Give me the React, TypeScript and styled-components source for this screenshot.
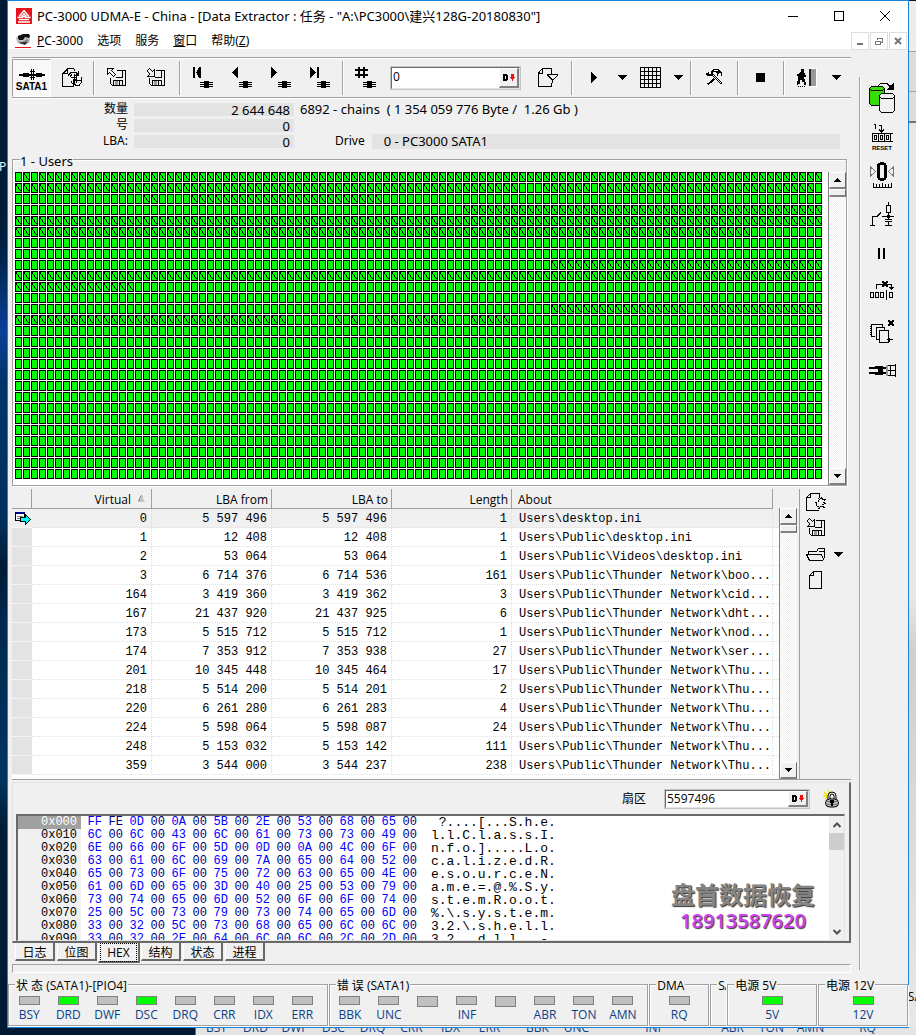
import React from 'react';
import styled, { createGlobalStyle, css } from 'styled-components';

const SANS = '"Open Sans", "Noto Sans CJK SC", sans-serif';
const WIDE = '"Noto Sans", "Noto Sans CJK SC", sans-serif';
const MONO = '"Liberation Mono", "Noto Sans CJK SC", monospace';

const Global = createGlobalStyle`
  *, *::before, *::after { box-sizing: border-box; }
  html, body { margin: 0; background: #001a35; }
  body { font: 12px/16px ${SANS}; color: #000; }
  button, input { font: inherit; color: inherit; margin: 0; border-radius: 0; }
  button { padding: 0; border: 0; background: none; }
  svg { display: block; flex: none; }
`;

/* ---------- desktop and window frame ---------- */

const Desktop = styled.div`
  position: relative;
  overflow: hidden;
  min-height: 100vh;
  padding: 0 7px 7px;
  background: linear-gradient(#001a36 0, #001d3a 22%, #00264d 25%, #0a3f98 32%, #003468 37%, #00305f 50%, #001b36 55%, #00284f 60%, #003561 75%, #001d36 80%, #001a33 100%);
`;

const DesktopLabel = styled.span`
  position: absolute;
  left: -1px;
  top: 159px;
  color: #fff;
`;

const BackWindow = styled.div`
  position: absolute;
  left: 195px;
  right: 0;
  top: 1px;
  bottom: 0;
  display: flex;
  flex-direction: column;
  justify-content: flex-end;
  overflow: hidden;
  border-left: 1px solid #1883d7;
  background: linear-gradient(#ececec 0 50px, #a0a0a0 50px 51px, #dcdcdc 51px 90px, #a0a0a0 90px 91px, #dcdcdc 91px 120px, #777 120px 122px, #e6e6e6 122px 600px, #cfcfcf 650px, #e8e8e8);
`;

const BackTitle = styled.span`
  position: absolute;
  right: -6px;
  bottom: 30px;
`;

const BackRow = styled.div`
  display: flex;
  height: 8px;
  padding-left: 1px;
  background: #e4e4e4;
  color: #0d3f86;
  line-height: 8px;
  align-items: center;
`;

const BackCell = styled.span<{ $wide?: number }>`
  flex: none;
  width: ${p => p.$wide ?? 39}px;
  height: 8px;
  text-align: center;
  line-height: 2px;
`;

const Window = styled.main`
  position: relative;
  border: 1px solid #1883d7;
  background: #f0f0f0;
`;

const TitleBar = styled.header`
  display: flex;
  align-items: center;
  height: 30px;
  padding-left: 8px;
  background: #fff;
`;

const Title = styled.h1`
  flex: 1;
  margin: 0 0 0 5px;
  font-family: ${WIDE};
  font-size: 13px;
  font-weight: 400;
  white-space: nowrap;
`;

const CaptionButton = styled.button`
  display: grid;
  place-items: center;
  width: 46px;
  height: 28px;
`;

const MenuBar = styled.nav`
  display: flex;
  align-items: center;
  height: 18px;
  padding: 1px 0 0 7px;
  background: #fff;
  font-family: ${WIDE};
`;

const MenuItem = styled.button`
  margin-left: 6px;
  margin-right: 8px;
  white-space: nowrap;
`;

const MdiButtons = styled.div`
  display: flex;
  gap: 1px;
  margin-left: auto;
  padding-right: 1px;
`;

const MdiButton = styled.button`
  display: grid;
  place-items: center;
  width: 18px;
  height: 18px;
  border: 1px solid #dedede;
`;

/* ---------- work area ---------- */

const Workspace = styled.div`
  display: flex;
  padding-left: 4px;
`;

const Main = styled.div`
  flex: 1;
  min-width: 0;
  padding-top: 8px;
`;

const SideBar = styled.aside`
  flex: none;
  width: 49px;
  margin: 28px 0 7px 8px;
  border-left: 1px solid #a0a0a0;
  box-shadow: inset 1px 0 #fff;
`;

const SideButton = styled.button`
  display: grid;
  place-items: center;
  width: 44px;
  height: 39px;
`;

const ToolBar = styled.div`
  display: flex;
  align-items: center;
  height: 41px;
  border-top: 1px solid #a0a0a0;
  border-bottom: 1px solid #a0a0a0;
  box-shadow: inset 0 1px #fff, 0 1px #fff;
`;

const ToolGroup = styled.div<{ $pad?: number }>`
  display: flex;
  align-items: center;
  height: 34px;
  padding: 0 ${p => p.$pad ?? 3}px;
  border-left: 1px solid #a0a0a0;
  box-shadow: inset 1px 0 #fff;
  &:first-child { padding: 0; border-left: 0; box-shadow: none; }
`;

const ToolButton = styled.button<{ $w?: number }>`
  display: grid;
  place-items: center;
  width: ${p => p.$w ?? 39}px;
  height: 34px;
`;

const PortButton = styled.button`
  display: flex;
  flex-direction: column;
  align-items: center;
  gap: 0;
  width: 39px;
  height: 38px;
  padding-top: 8px;
  border: 1px solid #fff;
  border-top-color: #a0a0a0;
  border-left-color: #a0a0a0;
  background: #f8f8f8;
  font: bold 10px/12px "Liberation Sans", sans-serif;
`;

const Field = styled.div<{ $w: number }>`
  display: flex;
  width: ${p => p.$w}px;
  height: ${p => (p.$w < 140 ? 24 : 20)}px;
  margin: 0 ${p => (p.$w < 140 ? 7 : 4)}px 0 5px;
  border: 2px solid #e3e3e3;
  border-top-color: #696969;
  border-left-color: #696969;
  outline: 1px solid #c4c4c4;
  outline-offset: -1px;
  background: #fff;
`;

const FieldInput = styled.input`
  flex: 1;
  width: 20px;
  padding: 0 0 1px 1px;
  border: 0;
  outline: 0;
  background: transparent;
`;

const FieldButton = styled.button`
  display: grid;
  place-items: center;
  width: 20px;
  border: 1px solid #fff;
  border-right: 2px solid #808080;
  border-bottom: 2px solid #808080;
  background: #f0f0f0;
`;

/* ---------- chain info ---------- */

const Info = styled.dl`
  display: grid;
  grid-template-columns: 116px 160px auto 1fr;
  column-gap: 6px;
  row-gap: 0;
  align-items: center;
  height: 53px;
  margin: 0;
  padding: 3px 11px 2px 0;
  grid-auto-rows: 16px;
  font-family: ${WIDE};
`;

const InfoLabel = styled.dt`
  text-align: right;
  white-space: nowrap;
`;

const InfoValue = styled.dd`
  height: 13px;
  margin: 0;
  padding-right: 4px;
  background: #e3e3e3;
  font-size: 13px;
  line-height: 14px;
  text-align: right;
`;

const InfoNote = styled.dd`
  grid-column: 3 / 5;
  margin: 0;
  font-size: 13px;
  white-space: pre;
`;

const DriveRow = styled.dd`
  grid-column: 3 / 5;
  display: flex;
  align-items: center;
  margin: 0;
  padding-left: 35px;
`;

const DriveValue = styled.span`
  flex: 1;
  height: 15px;
  margin-left: 7px;
  padding-left: 12px;
  background: #e3e3e3;
  font-size: 13px;
  line-height: 15px;
`;

/* ---------- sector map ---------- */

const MapFrame = styled.section`
  position: relative;
  display: flex;
  height: 327px;
  margin: 8px 4px 0 0;
  padding-top: 12px;
  border: 1px solid #a0a0a0;
  box-shadow: 1px 1px #fff, inset 1px 1px #fff;
`;

const MapTitle = styled.h2`
  position: absolute;
  left: 7px;
  top: -6px;
  margin: 0;
  background: #f0f0f0;
  font-family: ${WIDE};
  font-size: 13px;
  font-weight: 400;
  line-height: 14px;
`;

const MapArea = styled.div`
  flex: 1;
  min-width: 0;
  overflow: hidden;
  padding: 0 0 0 2px;
  background: #fff;
`;

const track = css`
  background: repeating-conic-gradient(#fff 0 25%, #f0f0f0 0 50%) 0 0 / 2px 2px;
`;

const ScrollTrack = styled.div`
  display: flex;
  flex-direction: column;
  flex: none;
  width: 18px;
  border-left: 1px solid #808080;
  ${track}
`;

const ScrollButton = styled.button<{ $end?: boolean }>`
  display: grid;
  place-items: center;
  height: 17px;
  margin-top: ${p => (p.$end ? 'auto' : '0')};
  border: 1px solid #fff;
  border-right: 1px solid #696969;
  border-bottom: 2px solid #808080;
  background: #f0f0f0;
`;

const ScrollThumb = styled.div`
  height: 8px;
  border: 1px solid #fff;
  border-right-color: #696969;
  border-bottom: 2px solid #808080;
  background: #f0f0f0;
`;

/* ---------- chain list ---------- */

const ListPane = styled.section`
  display: flex;
  height: 291px;
  margin-top: 3px;
  border-bottom: 1px solid #a0a0a0;
`;

const ListBody = styled.div`
  flex: 1;
  min-width: 0;
  overflow: hidden;
  background: #fff;
`;

const Table = styled.table`
  width: 100%;
  table-layout: fixed;
  border-collapse: separate;
  border-spacing: 0;
`;

const HeadCell = styled.th<{ $left?: boolean }>`
  height: 20px;
  padding: 2px 3px 0 6px;
  border-right: 1px solid #a0a0a0;
  border-bottom: 1px solid #a0a0a0;
  background: #f0f0f0;
  font-weight: 400;
  line-height: 16px;
  text-align: ${p => (p.$left ? 'left' : 'right')};
  white-space: nowrap;
  &:last-child { border: 0; }
  svg { display: inline-block; margin: 0 2px 2px 7px; }
`;

const Row = styled.tr<{ $active?: boolean }>`
  background: ${p => (p.$active ? '#f0f0f0' : '#fff')};
`;

const Cell = styled.td<{ $left?: boolean }>`
  height: 19px;
  padding: 2px 4px 0 ${p => (p.$left ? 7 : 2)}px;
  border-right: 1px dotted #dcdcdc;
  border-bottom: 1px dotted #e2e2e2;
  font-family: ${MONO};
  line-height: 16px;
  text-align: ${p => (p.$left ? 'left' : 'right')};
  white-space: pre;
  &:last-child { padding: 0; border-right: 0; }
`;

const MarkCell = styled.td<{ $active?: boolean }>`
  padding: 1px 0 0 3px;
  border-bottom: 1px dotted #fff;
  background: ${p => (p.$active ? '#f0f0f0' : '#e3e3e3')};
`;

const ListScroll = styled.div`
  display: flex;
  padding-top: 19px;
`;

const ListTools = styled.div`
  display: grid;
  grid-template-columns: 24px 22px;
  grid-auto-rows: 26px;
  align-content: start;
  flex: none;
  width: 52px;
  margin-left: 2px;
  padding-left: 4px;
  border-left: 1px solid #a0a0a0;
`;

const ListTool = styled.button<{ $drop?: boolean }>`
  display: grid;
  place-items: center;
  grid-column: ${p => (p.$drop ? 2 : 1)};
`;

/* ---------- sector viewer ---------- */

const Viewer = styled.section`
  height: 161px;
  margin-top: 2px;
  padding: 6px 4px 0 3px;
  border: 1px solid #e3e3e3;
  border-right: 2px solid #696969;
  border-bottom: 2px solid #696969;
`;

const ViewerBar = styled.div`
  display: flex;
  align-items: center;
  justify-content: flex-end;
  height: 20px;
  padding-right: 5px;
`;

const ViewerLabel = styled.label`
  margin-right: 13px;
`;

const LockButton = styled.button`
  margin-left: 9px;
`;

const HexPane = styled.div`
  position: relative;
  display: flex;
  height: 127px;
  margin-top: 5px;
  border: 1px solid #e3e3e3;
  border-top: 2px solid #696969;
  border-left: 2px solid #696969;
  background: #fff;
`;

const HexScroll = styled.div`
  flex: 1;
  overflow: hidden;
`;

const HexTable = styled.table`
  border-collapse: collapse;
  font-family: ${MONO};
  font-size: 12px;
  line-height: 13px;
  td, th { height: 13px; padding: 0; font-weight: 400; }
`;

const Offset = styled.th<{ $active?: boolean }>`
  width: 63px;
  background: ${p => (p.$active ? '#a0a0a0' : '#f0f0f0')};
  color: ${p => (p.$active ? '#fff' : '#000')};
  text-align: right;
  && { padding-right: 4px; }
`;

const Byte = styled.td<{ $odd: boolean }>`
  width: 21px;
  color: ${p => (p.$odd ? '#000080' : '#0000ff')};
  text-align: right;
`;

const Ascii = styled.td`
  font-size: 13px;
  white-space: pre;
  && { padding-left: 14px; }
`;

const FlatScroll = styled.div`
  display: flex;
  flex-direction: column;
  align-items: stretch;
  width: 15px;
  background: #f0f0f0;
`;

const FlatArrow = styled.button<{ $end?: boolean }>`
  display: grid;
  place-items: center;
  height: 17px;
  margin-top: ${p => (p.$end ? 'auto' : '0')};
`;

const FlatThumb = styled.div`
  height: 17px;
  background: #cdcdcd;
`;

const Watermark = styled.div`
  position: absolute;
  right: 29px;
  bottom: 7px;
  text-align: center;
  text-shadow: 1px 1px 1px #333;
`;

const WatermarkName = styled.div`
  color: #858585;
  font-size: 24px;
  font-weight: 600;
  line-height: 28px;
`;

const WatermarkPhone = styled.div`
  color: #cc44f2;
  font: 600 20px/24px ${SANS};
`;

const Tabs = styled.div`
  display: flex;
  gap: 2px;
  height: 21px;
  padding-left: 3px;
`;

const Tab = styled.button<{ $active?: boolean }>`
  width: ${p => (p.$active ? 42 : 40)}px;
  height: ${p => (p.$active ? 20 : 18)}px;
  margin: ${p => (p.$active ? '0 -1px' : '0')};
  border: 1px solid #fff;
  border-top: 0;
  border-right: 2px solid #696969;
  border-bottom: 2px solid #696969;
  line-height: 17px;
  span {
    display: block;
    margin: 0 1px;
    border: 1px dotted ${p => (p.$active ? '#000' : 'transparent')};
  }
`;

const MessageBar = styled.div`
  height: 9px;
  margin-bottom: 4px;
  border: 1px solid #fff;
  border-top-color: #a0a0a0;
  border-left-color: #a0a0a0;
`;

/* ---------- status lamps ---------- */

const StatusBar = styled.footer`
  display: grid;
  grid-template-columns: 320fr 320fr 60fr 16fr 90fr 90fr;
  gap: 1px;
  height: 50px;
  padding-top: 7px;
`;

const LampGroup = styled.fieldset<{ $count: number }>`
  position: relative;
  display: flex;
  justify-content: center;
  min-width: 0;
  height: 42px;
  margin: 0;
  padding: 11px ${p => (p.$count > 1 ? 4 : 0)}px 0 0;
  border: 1px solid #a0a0a0;
  border-right-width: ${p => (p.$count ? 1 : 0)}px;
  box-shadow: 1px 1px #fff, inset 1px 1px #fff;
`;

const LampTitle = styled.span`
  position: absolute;
  left: 6px;
  top: -7px;
  max-width: calc(100% - 6px);
  overflow: hidden;
  padding: 0 1px;
  background: #f0f0f0;
  line-height: 16px;
  white-space: nowrap;
`;

const Lamp = styled.div`
  display: flex;
  flex-direction: column;
  align-items: center;
  width: 39px;
  color: #0d3f86;
  line-height: 20px;
`;

const LampLight = styled.span<{ $on?: boolean }>`
  width: 21px;
  height: 11px;
  border: 1px solid #808080;
  background: ${p => (p.$on ? '#00ff00' : '#c0c0c0')};
`;

/* ---------- drawings ---------- */

type PicProps = { w: number; h: number; children: React.ReactNode };
const Pic = ({ w, h, children }: PicProps) => (
  <svg width={w} height={h} viewBox={`0 0 ${w} ${h}`} shapeRendering="crispEdges" fill="none" stroke="#000" aria-hidden="true">
    {children}
  </svg>
);

const Down = () => (
  <Pic w={10} h={5}><path d="M0 0h9v1h-1v1h-1v1h-1v1h-1v1h-1v-1h-1v-1h-1v-1h-1v-1h-1z" fill="#000" stroke="none" /></Pic>
);
const SmallArrow = ({ up }: { up?: boolean }) => (
  <Pic w={7} h={4}>
    <path d={up ? 'M3 0h1v1h1v1h1v1h1v1h-7v-1h1v-1h1v-1h1z' : 'M0 0h7v1h-1v1h-1v1h-1v1h-1v-1h-1v-1h-1v-1h-1z'} fill="#000" stroke="none" />
  </Pic>
);
const Chevron = ({ up }: { up?: boolean }) => (
  <svg width="8" height="6" viewBox="0 0 8 6" fill="none" stroke="#505050" strokeWidth="2"><path d={up ? 'M0.5 5L4 1.5 7.5 5' : 'M0.5 1L4 4.5 7.5 1'} /></svg>
);
const DIcon = () => (
  <Pic w={12} h={9}>
    <path d="M0 1h4v1h1v5h-1v1h-4zM2 3v3h1v-3z" fill="#000" fillRule="evenodd" stroke="none" />
    <path d="M8 1h3v3h1v1h-1v1h-1v1h-1v-1h-1v-1h-1v-1h1zM7 4h5v1h-5zM8 5h3v1h-3zM9 6h1v2h-1z" fill="#e81010" stroke="none" />
  </Pic>
);
const Logo = () => (
  <svg width="16" height="16" viewBox="0 0 16 16" fill="none" stroke="#fff" strokeWidth="1.3">
    <rect width="16" height="16" fill="#e8141c" stroke="none" />
    <path d="M3 8.500L8 2.500l5 6M5.500 8.500L8 5.500l2.500 3M1.500 9.500h5l1.500-1.500 1.500 1.500h5M3 11.700h10M2 14h12" />
  </svg>
);
const MenuLogo = () => (
  <svg width="16" height="16" viewBox="0 0 16 16">
    <path d="M1 5q1-3 7-3t7 1v5q-1 3-7 3t-6-2z" fill="#c0c0c0" />
    <path d="M3 3l5-2h6l1 2-1 2-4-1-2 3-4 0-1-2z" fill="#111" />
    <path d="M3 8l4 1 5-3 2 2-4 3-5-1z" fill="#888" />
    <path d="M4 10l4-1 5 0-3 3z" fill="#333" />
    <path d="M0 14h16v1H0z" fill="#e81010" />
  </svg>
);
const PortIcon = () => (
  <Pic w={26} h={13}>
    <path d="M0 6h26v2h-26zM4 5h6v4h-6zM17 5h6v4h-6z" fill="#000" stroke="none" />
    <path d="M11 3.500h5M11 9.500h5M12.500 1v11M14.500 1v11" />
  </Pic>
);
const NavIcon = ({ kind }: { kind: 'first' | 'prev' | 'next' | 'last' | 'hash' }) => (
  <Pic w={22} h={22}>
    <g fill="#000" stroke="none">
      {kind === 'first' && <path d="M1 0h2v11h-2zM4 5l1-1v-1l1-1v-1h1v-1h2v11h-2v-1h-1v-1l-1-1v-1l-1-1z" />}
      {kind === 'prev' && <path d="M1 5h1v-1h1v-1h1v-1h1v-1h1v-1h1v11h-1v-1h-1v-1h-1v-1h-1v-1h-1v-1h-1z" />}
      {kind === 'next' && <path d="M1 0h1v1h1v1h1v1h1v1h1v1h1v1h-1v1h-1v1h-1v1h-1v1h-1v1h-1z" />}
      {kind === 'last' && <path d="M1 0h1v1h1v1h1v1h1v1h1v1h1v1h-1v1h-1v1h-1v1h-1v1h-1v1h-1zM8 0h2v11h-2z" />}
      {kind === 'hash' && <path d="M3 0h2v11h-2zM8 0h2v11h-2zM0 2h13v2h-13zM0 7h13v2h-13z" />}
      <path d="M8 15h13v1h-13zM8 17h13v1h-13zM8 19h13v1h-13zM12 14h5v7h-5z" />
    </g>
  </Pic>
);
const PageRefresh = () => (
  <Pic w={21} h={20}>
    <path d="M5 .5h7M5.500 1l-5 5v12.500h11M1 5.500h4v-5M12.500 1v2" />
    <path d="M6 7.500l3-3h5l2 2M16.500 3v4h-4M8 8.500l2-2M15 11.500h-4v4M11.500 15l2 2h4l2-3M9 13l3 5M12.500 6v9M14.500 6v9M9 9.500h5M13 12.500h6M19.500 9v5" />
  </Pic>
);
const Disk = ({ out }: { out?: boolean }) => (
  <Pic w={20} h={20}>
    <path d={out ? 'M.5 .5h6l-2 2 4 4-2 2-4-4-2 2z' : 'M3.500 .5l3 3 2-2v6.500h-6.500l2-2-3-3z'} />
    <path d="M10 2.500h8.500v15h-13l-2-2v-6M9 9.500h6.500v-7M6.500 17v-5h9v5M12.500 13v4" />
    <path d="M8 13h3v4h-3z" fill="#999" stroke="none" />
  </Pic>
);
const PageFilter = () => (
  <Pic w={21} h={20}>
    <path d="M4 .5h9.500v5M4.500 1v4h-4M4 1l-3.500 4v13.500h13v-4M9 6.500h11M9.500 7l5 5v3M20 7l-5 5" />
  </Pic>
);
const GridIcon = () => (
  <Pic w={22} h={22}>
    <path d="M0 .5h21M0 4.500h21M0 8.500h21M0 12.500h21M0 16.500h21M0 20.500h21M.5 0v21M4.500 0v21M8.500 0v21M12.500 0v21M16.500 0v21M20.500 0v21" />
  </Pic>
);
const ToolsIcon = () => (
  <Pic w={17} h={17}>
    <path d="M5 5l10 10M6 4l10 10M14.500 15.500l1.500-1.500M10 7l-8 8M11 8l-9 8M1 14l2 2" />
    <path d="M0 4h2v-1h1v2h2v-3h1v1h1v3h-1v1h-5v-1h-1zM6 1h1v-1h6v1h1v1h1v1h1v4h-1v-3h-2v1h-1v2h-1v-3h-1v-1h-4z" fill="#000" stroke="none" />
    <path d="M8 1h4v1h-4z" fill="#f0f0f0" stroke="none" />
  </Pic>
);
const ExitIcon = () => (
  <Pic w={20} h={19}>
    <path d="M12 0h8v19h-8z" fill="#fff" stroke="none" />
    <path d="M12 1h2v17h-2z" fill="#222" stroke="none" />
    <path d="M14 1h5v17h-5z" fill="#999" stroke="none" />
    <path d="M4 1h3v3h-3zM3 4h4v1h1v2h1v2h-2v2h1v3h1v3h-2v-3h-2v-2h-2v4h-2v1h-2v-1h1v-3h1v-5h-1v2h-1v-4h2z" fill="#000" stroke="none" />
    <path d="M1 18.500h8" strokeDasharray="1 1" />
  </Pic>
);

const CopyIcon = () => (
  <Pic w={32} h={32}>
    <path d="M3.500 7.500l2-2h11l2 2v15l-2 2h-11l-2-2z" fill="#37dc06" />
    <path d="M3.500 7.500l2 2h11l2-2" />
    <path d="M13.500 14.500l2-2h11l2 2v15l-2 2h-11l-2-2z" fill="#f0f0f0" />
    <path d="M13.500 15.500l2 2h11l2-2M12 4.500l3-2h6l3 3" />
    <path d="M28 1v8h-8l4-3-1-2h3z" fill="#000" stroke="none" />
  </Pic>
);
const ResetIcon = () => (
  <Pic w={32} h={32}>
    <path d="M8 4.500h2M9.500 4v5M13 5.500h2.500v6M13 9.500l2.500 2.500 2.500-2.500" />
    <path d="M27 13.500h-20.500v8h20.500M12.500 13v9M18.500 13v9M24.500 13v9" />
    <rect x="8.500" y="15.500" width="2" height="4" /><rect x="14.500" y="15.500" width="2" height="4" /><rect x="20.500" y="15.500" width="2" height="4" />
    <text x="6" y="30" fill="#000" stroke="none" fontFamily="Liberation Sans" fontWeight="700" fontSize="6">RESET</text>
  </Pic>
);
const ZeroIcon = () => (
  <Pic w={32} h={32}>
    <rect x="12.500" y="4.500" width="7" height="16" rx="3" strokeWidth="3" />
    <path d="M4.500 8v9l5-4.500zM27.500 8v9l-5-4.500z" stroke="#777" />
    <path d="M7 28.500h19M7.500 24v5M10.500 25v3M13.500 25v3M16.500 24v5M19.500 25v3M22.500 25v3M25.500 24v5" />
  </Pic>
);
const SwitchIcon = () => (
  <Pic w={32} h={32}>
    <path d="M4 27.500h5M6.500 27v-8.500h4.500l4-4M16 18.500h12M22.500 4v3M20.500 7.500h4v7h-4zM22.500 14v7M19 21.500h7M19 23.500h7M22.500 24v3M19 27.500h7" />
    <path d="M21 17h3v3h-3z" fill="#000" stroke="none" />
  </Pic>
);
const PauseIcon = () => (
  <Pic w={32} h={32}><path d="M12 11h2v11h-2zM17 11h2v11h-2z" fill="#000" stroke="none" /></Pic>
);
const SkipIcon = () => (
  <Pic w={32} h={32}>
    <path d="M4.500 16.500h3v5h-3zM9.500 16.500h3v5h-3zM14.500 16.500h3v5h-3zM23.500 16.500h3v5h-3zM20.500 14v10M10.500 13v-4.500h15v5M23 11.500h5M24 12.500h3" />
    <path d="M16 5h2v1h2v-1h2v2h-1v2h1v2h-2v-1h-2v1h-2v-2h1v-2h-1z" fill="#000" stroke="none" />
  </Pic>
);
const StackIcon = () => (
  <Pic w={32} h={32}>
    <path d="M12 9.500h-6.500v12h3M4 11.500h2M4 13.500h2M4 15.500h2M4 17.500h2M4 19.500h2M10 12.500h6v-3h-5M10.500 12v12h3M10 12.500h8.500v3M13.500 15.500h9v12h-9zM21 24.500h6M23.500 23v4" />
    <path d="M22 5h2v1h2v-1h2v2h-1v2h1v2h-2v-1h-2v1h-2v-2h1v-2h-1z" fill="#000" stroke="none" />
  </Pic>
);
const PlugIcon = () => (
  <Pic w={32} h={32}>
    <path d="M3 13h19v2h-19zM3 18h19v2h-19zM12 15h5v3h-5zM9 12h8v1h-8zM9 20h8v1h-8z" fill="#000" stroke="none" />
    <path d="M20 11h2v11h-2z" fill="#999" stroke="none" />
    <path d="M22 11.500h7M22 21.500h7M22 16.500h7M24.500 11v11M29.500 10v13" />
  </Pic>
);
const PageGear = () => (
  <Pic w={20} h={19}>
    <path d="M13 17.500h-12.500v-13l4-4h9v4M4.500 0v4.500h-4" />
    <path d="M12 5.500l2 1 2-2 1 2 2 0-1 3 1 1-2 1 1 3-3-1-2 2-1-2-2 0 1-3-1-1 2-1z" strokeDasharray="2 1" />
  </Pic>
);
const FolderIcon = () => (
  <Pic w={20} h={13}>
    <path d="M2.500 5.500v-2h8l2-3h6v9l-2 3h-13l-3-6h15l2 5M13 3.500h5" />
  </Pic>
);
const PageIcon = () => (
  <Pic w={14} h={18}><path d="M.5 4.500l4-4h8v17h-12zM4.500 0v4.500h-4" /></Pic>
);
const LockIcon = () => (
  <svg width="17" height="18" viewBox="0 0 17 18" fill="none" stroke="#000">
    <path d="M1 2l4 4M0 6h5M6 0v4M2 9l3-3" stroke="#f4e800" strokeWidth="1.500" />
    <path d="M5 10V6q0-4 4-4t4 4v4M7 9V6.500q0-2.500 2-2.500t2 2.500V9" />
    <rect x="2.500" y="9" width="13" height="8" rx="4" fill="#b4b4b4" />
    <path d="M3 11.500h12M3 14.500h12" stroke="#777" />
    <path d="M7 10h4v3H10v3H8v-3H7z" fill="#000" stroke="none" />
  </svg>
);
const CurrentMark = () => (
  <Pic w={17} h={13}>
    <path d="M.5 1.500h9v7h-9z" fill="#fff" stroke="#000" />
    <path d="M0 0h10v2h-10z" fill="#000080" stroke="none" />
    <path d="M2 4.500h6M2 6.500h3" stroke="#777" />
    <path d="M5.500 5.500h5v-3l5 5-5 5v-3h-5z" fill="#00ffff" />
  </Pic>
);

/* ---------- sector map drawing ---------- */

const COLS = 101;
const ROWS = 28;
const PITCH_X = 8;
const PITCH_Y = 11;

// Inclusive column ranges of chained (struck) cells, keyed by row.
const struck: Record<number, number[][]> = {
  0: [[1, 1], [3, 100]],
  1: [[0, 62], [66, 71], [73, 99]],
  2: [[16, 17], [22, 45]],
  3: [[56, 100]],
  4: [[0, 100]],
  5: [[0, 91]],
  8: [[67, 100]],
  9: [[0, 100]],
  10: [[0, 14]],
  12: [[67, 83], [86, 100]],
  13: [[0, 33], [40, 40], [42, 42], [45, 45], [47, 47], [49, 53], [57, 61]],
};

const SectorMap = () => (
  <svg width={COLS * PITCH_X} height={ROWS * PITCH_Y} shapeRendering="crispEdges" role="img" aria-label="Users">
    <defs>
      <pattern id="cell" width={PITCH_X} height={PITCH_Y} patternUnits="userSpaceOnUse">
        <rect width="7" height="10" fill="#000" />
        <rect x="1" y="1" width="5" height="8" fill="#0f0" />
      </pattern>
      <pattern id="strike" width={PITCH_X} height={PITCH_Y} patternUnits="userSpaceOnUse">
        <path d="M1 1h1v2h-1zM2 3h1v1h-1zM3 4h1v2h-1zM4 6h1v1h-1zM5 7h1v1h-1z" fill="#000" />
      </pattern>
    </defs>
    <rect width={COLS * PITCH_X} height={ROWS * PITCH_Y} fill="url(#cell)" />
    {Object.entries(struck).flatMap(([row, ranges]) =>
      ranges.map(([a, b]) => (
        <rect key={`${row}-${a}`} x={a * PITCH_X} y={+row * PITCH_Y} width={(b - a + 1) * PITCH_X} height={PITCH_Y} fill="url(#strike)" />
      )),
    )}
  </svg>
);

/* ---------- data ---------- */

const chains = [
  ['0', '5 597 496', '5 597 496', '1', 'Users\\desktop.ini'],
  ['1', '12 408', '12 408', '1', 'Users\\Public\\desktop.ini'],
  ['2', '53 064', '53 064', '1', 'Users\\Public\\Videos\\desktop.ini'],
  ['3', '6 714 376', '6 714 536', '161', 'Users\\Public\\Thunder Network\\boo...'],
  ['164', '3 419 360', '3 419 362', '3', 'Users\\Public\\Thunder Network\\cid...'],
  ['167', '21 437 920', '21 437 925', '6', 'Users\\Public\\Thunder Network\\dht...'],
  ['173', '5 515 712', '5 515 712', '1', 'Users\\Public\\Thunder Network\\nod...'],
  ['174', '7 353 912', '7 353 938', '27', 'Users\\Public\\Thunder Network\\ser...'],
  ['201', '10 345 448', '10 345 464', '17', 'Users\\Public\\Thunder Network\\Thu...'],
  ['218', '5 514 200', '5 514 201', '2', 'Users\\Public\\Thunder Network\\Thu...'],
  ['220', '6 261 280', '6 261 283', '4', 'Users\\Public\\Thunder Network\\Thu...'],
  ['224', '5 598 064', '5 598 087', '24', 'Users\\Public\\Thunder Network\\Thu...'],
  ['248', '5 153 032', '5 153 142', '111', 'Users\\Public\\Thunder Network\\Thu...'],
  ['359', '3 544 000', '3 544 237', '238', 'Users\\Public\\Thunder Network\\Thu...'],
];

const dump = [
  ['0x000', 'FF FE 0D 00 0A 00 5B 00 2E 00 53 00 68 00 65 00', ' ?....[...S.h.e.'],
  ['0x010', '6C 00 6C 00 43 00 6C 00 61 00 73 00 73 00 49 00', 'l.l.C.l.a.s.s.I.'],
  ['0x020', '6E 00 66 00 6F 00 5D 00 0D 00 0A 00 4C 00 6F 00', 'n.f.o.].....L.o.'],
  ['0x030', '63 00 61 00 6C 00 69 00 7A 00 65 00 64 00 52 00', 'c.a.l.i.z.e.d.R.'],
  ['0x040', '65 00 73 00 6F 00 75 00 72 00 63 00 65 00 4E 00', 'e.s.o.u.r.c.e.N.'],
  ['0x050', '61 00 6D 00 65 00 3D 00 40 00 25 00 53 00 79 00', 'a.m.e.=.@.%.S.y.'],
  ['0x060', '73 00 74 00 65 00 6D 00 52 00 6F 00 6F 00 74 00', 's.t.e.m.R.o.o.t.'],
  ['0x070', '25 00 5C 00 73 00 79 00 73 00 74 00 65 00 6D 00', '%.\\.s.y.s.t.e.m.'],
  ['0x080', '33 00 32 00 5C 00 73 00 68 00 65 00 6C 00 6C 00', '3.2.\\.s.h.e.l.l.'],
  ['0x090', '33 00 32 00 2E 00 64 00 6C 00 6C 00 2C 00 2D 00', '3.2...d.l.l.,.-.'],
];

const stateLamps = ['BSY', 'DRD', 'DWF', 'DSC', 'DRQ', 'CRR', 'IDX', 'ERR'];
const errorLamps = ['BBK', 'UNC', '', 'INF', '', 'ABR', 'TON', 'AMN'];
const lit = ['DRD', 'DSC', '5V', '12V'];

const Lamps = ({ title, names }: { title: string; names: string[] }) => (
  <LampGroup aria-label={title} $count={names.length}>
    <LampTitle>{title}</LampTitle>
    {names.map((n, i) => (
      <Lamp key={i}><LampLight $on={lit.includes(n)} />{n}</Lamp>
    ))}
  </LampGroup>
);

const sideTools: [string, () => React.ReactElement][] = [
  ['Copy', CopyIcon], ['Reset', ResetIcon], ['Recalibrate', ZeroIcon], ['Power', SwitchIcon],
  ['Pause', PauseIcon], ['Skip', SkipIcon], ['Clear', StackIcon], ['Connect', PlugIcon],
];

export default function App() {
  return (
    <Desktop>
      <Global />
      <DesktopLabel>P</DesktopLabel>
      <BackWindow aria-hidden="true">
        <BackTitle>SA</BackTitle>
        <BackRow>
          {stateLamps.map(n => <BackCell key={n}>{n}</BackCell>)}
          <BackCell $wide={9} />
          {errorLamps.map((n, i) => <BackCell key={i}>{n}</BackCell>)}
          <BackCell $wide={18} />
          <BackCell>RQ</BackCell>
        </BackRow>
      </BackWindow>

      <Window>
        <TitleBar>
          <Logo />
          <Title>PC-3000 UDMA-E - China - [Data Extractor : 任务 - "A:\PC3000\建兴128G-20180830"]</Title>
          <CaptionButton aria-label="Minimize"><Pic w={10} h={10}><path d="M0 5.500h10" /></Pic></CaptionButton>
          <CaptionButton aria-label="Maximize"><Pic w={10} h={10}><path d="M.5 .5h9v9h-9z" /></Pic></CaptionButton>
          <CaptionButton aria-label="Close">
            <svg width="10" height="10" viewBox="0 0 10 10" stroke="#000"><path d="M0 0l10 10M10 0L0 10" /></svg>
          </CaptionButton>
        </TitleBar>
        <MenuBar>
          <MenuLogo />
          <MenuItem><u>P</u>C-3000</MenuItem>
          <MenuItem>选项</MenuItem>
          <MenuItem>服务</MenuItem>
          <MenuItem><u>窗</u>口</MenuItem>
          <MenuItem>帮助(<u>Z</u>)</MenuItem>
          <MdiButtons>
            <MdiButton aria-label="Minimize task"><Pic w={8} h={8}><path d="M1 6h6v2h-6z" fill="#777" stroke="none" /></Pic></MdiButton>
            <MdiButton aria-label="Restore task"><Pic w={8} h={8}><path d="M2 1h6M2.500 1v2M7.500 1v4h-2M0 4h6M.5 4v3.500h5v-4" stroke="#777" /></Pic></MdiButton>
            <MdiButton aria-label="Close task"><svg width="8" height="8" viewBox="0 0 8 8" stroke="#777" strokeWidth="2"><path d="M1 1l6 6M7 1L1 7" /></svg></MdiButton>
          </MdiButtons>
        </MenuBar>

        <Workspace>
          <Main>
            <ToolBar>
              <ToolGroup>
                <PortButton><PortIcon />SATA1</PortButton>
                <ToolButton $w={42} aria-label="Refresh"><PageRefresh /></ToolButton>
              </ToolGroup>
              <ToolGroup>
                <ToolButton $w={39} aria-label="Load"><Disk out /></ToolButton>
                <ToolButton $w={40} aria-label="Save"><Disk /></ToolButton>
              </ToolGroup>
              <ToolGroup>
                <ToolButton aria-label="First"><NavIcon kind="first" /></ToolButton>
                <ToolButton aria-label="Previous"><NavIcon kind="prev" /></ToolButton>
                <ToolButton aria-label="Next"><NavIcon kind="next" /></ToolButton>
                <ToolButton aria-label="Last"><NavIcon kind="last" /></ToolButton>
              </ToolGroup>
              <ToolGroup>
                <ToolButton aria-label="Go to"><NavIcon kind="hash" /></ToolButton>
                <Field $w={131}>
                  <FieldInput aria-label="Number" defaultValue="0" />
                  <FieldButton aria-label="Decimal"><DIcon /></FieldButton>
                </Field>
                <ToolButton $w={40} aria-label="Filter"><PageFilter /></ToolButton>
              </ToolGroup>
              <ToolGroup $pad={2}>
                <ToolButton $w={39} aria-label="Start">
                  <Pic w={6} h={11}><path d="M0 0h1v1h1v1h1v1h1v1h1v1h1v1h-1v1h-1v1h-1v1h-1v1h-1v1h-1z" fill="#000" stroke="none" /></Pic>
                </ToolButton>
                <ToolButton $w={19} aria-label="Start options"><Down /></ToolButton>
                <ToolButton $w={37} aria-label="Map"><GridIcon /></ToolButton>
                <ToolButton $w={19} aria-label="Map options"><Down /></ToolButton>
              </ToolGroup>
              <ToolGroup><ToolButton $w={40} aria-label="Settings"><ToolsIcon /></ToolButton></ToolGroup>
              <ToolGroup>
                <ToolButton $w={39} aria-label="Stop"><Pic w={9} h={9}><path d="M0 0h9v9h-9z" fill="#000" stroke="none" /></Pic></ToolButton>
              </ToolGroup>
              <ToolGroup>
                <ToolButton $w={40} aria-label="Exit"><ExitIcon /></ToolButton>
                <ToolButton $w={20} aria-label="Exit options"><Down /></ToolButton>
              </ToolGroup>
            </ToolBar>

            <Info>
              <InfoLabel>数量</InfoLabel>
              <InfoValue>2 644 648</InfoValue>
              <InfoNote>{'6892 - chains  ( 1 354 059 776 Byte /  1.26 Gb )'}</InfoNote>
              <InfoLabel>号</InfoLabel>
              <InfoValue>0</InfoValue>
              <InfoNote />
              <InfoLabel>LBA:</InfoLabel>
              <InfoValue>0</InfoValue>
              <DriveRow>Drive<DriveValue>0 - PC3000 SATA1</DriveValue></DriveRow>
            </Info>

            <MapFrame>
              <MapTitle>1 - Users</MapTitle>
              <MapArea><SectorMap /></MapArea>
              <ScrollTrack>
                <ScrollButton aria-label="Map up"><SmallArrow up /></ScrollButton>
                <ScrollThumb />
                <ScrollButton $end aria-label="Map down"><SmallArrow /></ScrollButton>
              </ScrollTrack>
            </MapFrame>

            <ListPane>
              <ListBody>
                <Table>
                  <colgroup>
                    <col style={{ width: 20 }} /><col style={{ width: 120 }} /><col style={{ width: 120 }} />
                    <col style={{ width: 120 }} /><col style={{ width: 120 }} /><col /><col style={{ width: 6 }} />
                  </colgroup>
                  <thead>
                    <tr>
                      <HeadCell />
                      <HeadCell>
                        Virtual
                        <Pic w={8} h={7}><path d="M4 0L7 7H0z" fill="#c8c8c8" stroke="none" /><path d="M3.500 0L.5 6.500" stroke="#888" /></Pic>
                      </HeadCell>
                      <HeadCell>LBA from</HeadCell>
                      <HeadCell>LBA to</HeadCell>
                      <HeadCell>Length</HeadCell>
                      <HeadCell $left>About</HeadCell>
                      <HeadCell />
                    </tr>
                  </thead>
                  <tbody>
                    {chains.map((c, i) => (
                      <Row key={c[0]} $active={i === 0}>
                        <MarkCell $active={i === 0}>{i === 0 && <CurrentMark />}</MarkCell>
                        <Cell>{c[0]}</Cell>
                        <Cell>{c[1]}</Cell>
                        <Cell>{c[2]}</Cell>
                        <Cell>{c[3]}</Cell>
                        <Cell $left>{c[4]}</Cell>
                        <Cell />
                      </Row>
                    ))}
                  </tbody>
                </Table>
              </ListBody>
              <ListScroll>
                <ScrollTrack>
                  <ScrollButton aria-label="List up"><SmallArrow up /></ScrollButton>
                  <ScrollThumb />
                  <ScrollButton $end aria-label="List down"><SmallArrow /></ScrollButton>
                </ScrollTrack>
              </ListScroll>
              <ListTools>
                <ListTool aria-label="List settings"><PageGear /></ListTool>
                <ListTool aria-label="Save list"><Disk /></ListTool>
                <ListTool aria-label="Open list"><FolderIcon /></ListTool>
                <ListTool $drop aria-label="Recent lists"><Down /></ListTool>
                <ListTool aria-label="New list"><PageIcon /></ListTool>
              </ListTools>
            </ListPane>

            <Viewer>
              <ViewerBar>
                <ViewerLabel htmlFor="sector">扇区</ViewerLabel>
                <Field $w={146}>
                  <FieldInput id="sector" defaultValue="5597496" />
                  <FieldButton aria-label="Decimal sector"><DIcon /></FieldButton>
                </Field>
                <LockButton aria-label="Lock"><LockIcon /></LockButton>
              </ViewerBar>
              <HexPane>
                <HexScroll>
                  <HexTable>
                    <tbody>
                      {dump.map(([offset, bytes, text], i) => (
                        <tr key={offset}>
                          <Offset scope="row" $active={i === 0}>{offset}</Offset>
                          {bytes.split(' ').map((b, j) => <Byte key={j} $odd={j % 2 === 1}>{b}</Byte>)}
                          <Ascii>{text}</Ascii>
                        </tr>
                      ))}
                    </tbody>
                  </HexTable>
                </HexScroll>
                <FlatScroll>
                  <FlatArrow aria-label="Sector up"><Chevron up /></FlatArrow>
                  <FlatThumb />
                  <FlatArrow $end aria-label="Sector down"><Chevron /></FlatArrow>
                </FlatScroll>
                <Watermark>
                  <WatermarkName>盘首数据恢复</WatermarkName>
                  <WatermarkPhone>18913587620</WatermarkPhone>
                </Watermark>
              </HexPane>
            </Viewer>

            <Tabs>
              {['日志', '位图', 'HEX', '结构', '状态', '进程'].map(t => (
                <Tab key={t} $active={t === 'HEX'}><span>{t}</span></Tab>
              ))}
            </Tabs>
            <MessageBar />
          </Main>

          <SideBar>
            {sideTools.map(([label, Icon]) => (
              <SideButton key={label} aria-label={label}><Icon /></SideButton>
            ))}
          </SideBar>
        </Workspace>

        <StatusBar>
          <Lamps title="状 态 (SATA1)-[PIO4]" names={stateLamps} />
          <Lamps title="错 误 (SATA1)" names={errorLamps} />
          <Lamps title="DMA" names={['RQ']} />
          <Lamps title="SATA" names={[]} />
          <Lamps title="电源 5V" names={['5V']} />
          <Lamps title="电源 12V" names={['12V']} />
        </StatusBar>
      </Window>
    </Desktop>
  );
}
